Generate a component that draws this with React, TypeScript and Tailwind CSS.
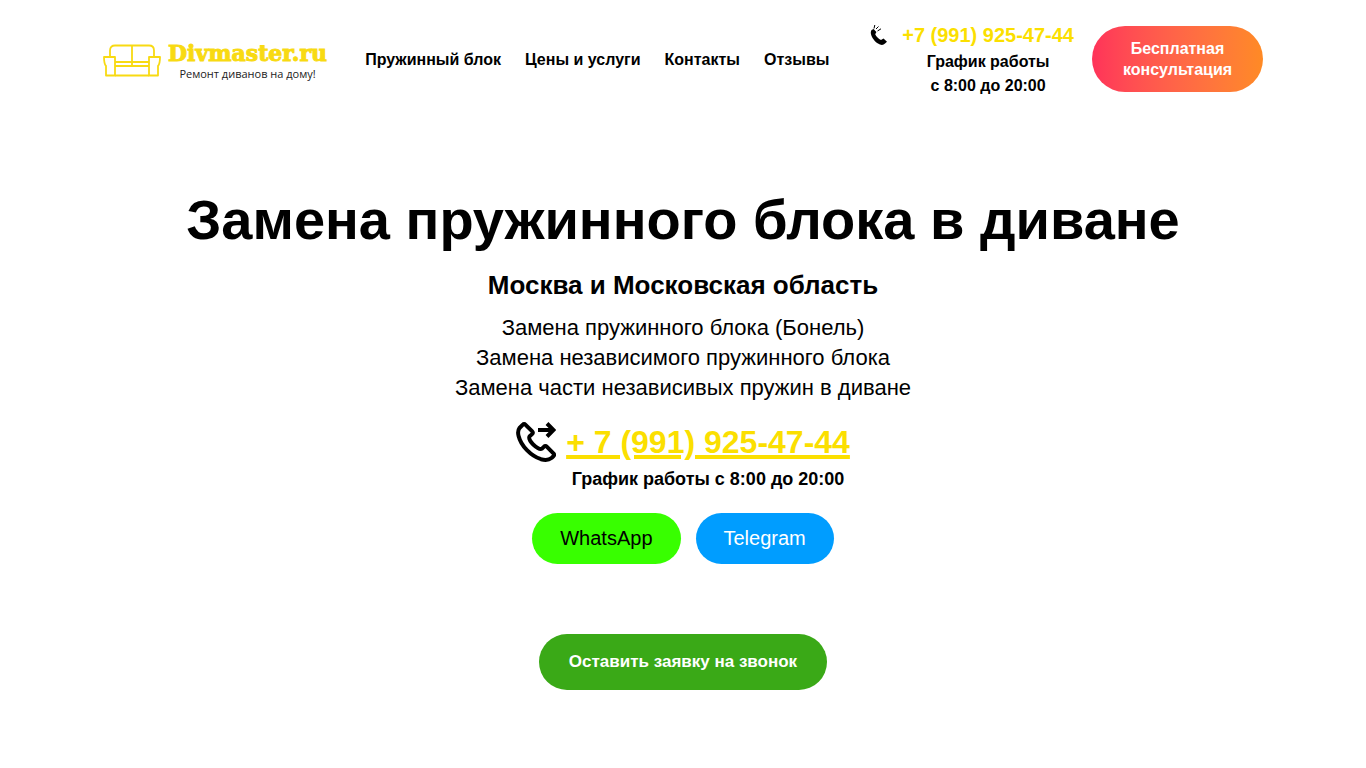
const menu = [
  { title: 'Пружинный блок', href: '#block' },
  { title: 'Цены и услуги', href: '#prices' },
  { title: 'Контакты', href: '#contacts' },
  { title: 'Отзывы', href: '#reviews' },
];

const services = [
  'Замена пружинного блока (Бонель)',
  'Замена независимого пружинного блока',
  'Замена части независивых пружин в диване',
];

const SofaIcon = () => (
  <svg width="58" height="34" viewBox="0 -1 58 34" fill="none" stroke="#f8da12" strokeWidth="1.8" strokeLinejoin="round" aria-hidden="true">
    <path d="M7 13V6.500C7 3 9 1.500 12 1.500H46C49 1.500 51 3 51 6.500V13" />
    <path d="M29 1.500V22M12 22H46M12 18H46M12 31.500H46" />
    <path d="M3 31.500V22C1 20 1 18 1 13H12V31.500H3Z" />
    <path d="M55 31.500V22C57 20 57 18 57 13H46V31.500H55Z" />
  </svg>
);

const HandsetIcon = () => (
  <svg width="18" height="22" viewBox="0 0 18 22" fill="none" aria-hidden="true">
    <path
      d="M1.600 6C.6 7 .6 9 1.200 11C2.500 15 6 19 10 20.500C12 21.300 13.800 20.800 15 19.600L17 17.800L13.500 14.600L11 16C8.500 14.700 6.200 12.500 5.200 10.200L6.400 8L3.600 5Z"
      fill="#000"
    />
    <path d="M4 4.500L4.800 1M6 5L8.500 2.500M7.500 7L11 4.800" stroke="#000" strokeWidth="1" />
  </svg>
);

const CallIcon = () => (
  <svg width="40" height="40" viewBox="0 0 40 40" fill="none" stroke="#000" strokeWidth="4" aria-hidden="true">
    <path
      d="M6.600 2.800L3.500 6C2 8 1.800 11 2.600 14C5 24 15 34 25 37.200C29 38.300 33 38 35.500 36L37.400 34.200C38.300 33.200 38.300 32.200 37.400 31.300L31 24.800C30 23.800 28.800 23.800 27.800 24.800L26 26.600C24.500 27.600 21.500 26.500 17.500 22.800C13.800 19 12.500 16 13.600 14.200L16 12.200C17 11.200 17 10.200 16 9.200L9.600 2.800C8.600 1.800 7.600 1.800 6.600 2.800Z"
      strokeLinejoin="round"
    />
    <path d="M22 8H37M31 1.500L37.500 8L31 14.500" />
  </svg>
);

const Header = () => {
  return (
    <header className="w-full max-w-[1160px] mx-auto pt-5 flex items-center">
      <a href="#top" className="pt-[2px] flex items-center gap-[7px]">
        <SofaIcon />
        <span className="flex flex-col">
          <span className="font-['DejaVu_Serif',serif] font-bold text-[22px] leading-[26px] text-[#f8da12] [-webkit-text-stroke:1px_#f8da12]">
            Divmaster.ru
          </span>
          <span className="font-['Open_Sans',sans-serif] text-[11px] leading-[15px] text-[#222] text-center">
            Ремонт диванов на дому!
          </span>
        </span>
      </a>

      <nav className="ml-[38px] pt-[2px] flex gap-6 text-base font-bold whitespace-nowrap">
        {menu.map((item) => (
          <a key={item.href} href={item.href}>
            {item.title}
          </a>
        ))}
      </nav>

      <div className="ml-auto flex items-start gap-[14px] whitespace-nowrap">
        <span className="pt-1">
          <HandsetIcon />
        </span>
        <div className="text-center font-bold leading-6">
          <a href="tel:+79919254744" className="block text-xl leading-[30px] text-[#fbdf00]">
            +7 (991) 925-47-44
          </a>
          <p>График работы</p>
          <p>с 8:00 до 20:00</p>
        </div>
      </div>

      <button
        type="button"
        className="ml-[18px] w-[171px] py-3 rounded-full bg-gradient-to-r from-[#ff3259] to-[#ff8a24] text-white text-base leading-[21px] font-bold cursor-pointer"
      >
        Бесплатная
        <br />
        консультация
      </button>
    </header>
  );
};

const Hero = () => {
  return (
    <main className="pt-[88px] pb-[78px] flex flex-col items-center text-center">
      <h1 className="text-[56px] leading-[68px] font-bold">Замена пружинного блока в диване</h1>
      <h2 className="mt-[14px] text-[26px] leading-[34px] font-bold">Москва и Московская область</h2>

      <ul className="mt-[11px] text-[22px] leading-[30px]">
        {services.map((service) => (
          <li key={service}>{service}</li>
        ))}
      </ul>

      <div className="mt-[19px] flex items-start gap-[10px]">
        <CallIcon />
        <div className="font-bold">
          <a
            href="tel:+79919254744"
            className="block text-[32px] leading-10 text-[#fbdf00] underline decoration-4 underline-offset-2"
          >
            + 7 (991) 925-47-44
          </a>
          <p className="mt-1 text-lg leading-[26px]">График работы с 8:00 до 20:00</p>
        </div>
      </div>

      <div className="mt-[21px] flex gap-[15px] text-xl leading-[27px]">
        <a href="#whatsapp" className="px-7 py-3 rounded-full bg-[#38ff00] text-black">
          WhatsApp
        </a>
        <a href="#telegram" className="px-7 py-3 rounded-full bg-[#009dff] text-white">
          Telegram
        </a>
      </div>

      <button
        type="button"
        className="mt-[70px] px-[30px] py-4 rounded-full bg-[#3aa917] text-white text-[17px] leading-6 font-bold cursor-pointer"
      >
        Оставить заявку на звонок
      </button>
    </main>
  );
};

const App = () => {
  return (
    <div className="bg-white text-black font-['Liberation_Sans',Arial,sans-serif]">
      <Header />
      <Hero />
    </div>
  );
};

export default App;
